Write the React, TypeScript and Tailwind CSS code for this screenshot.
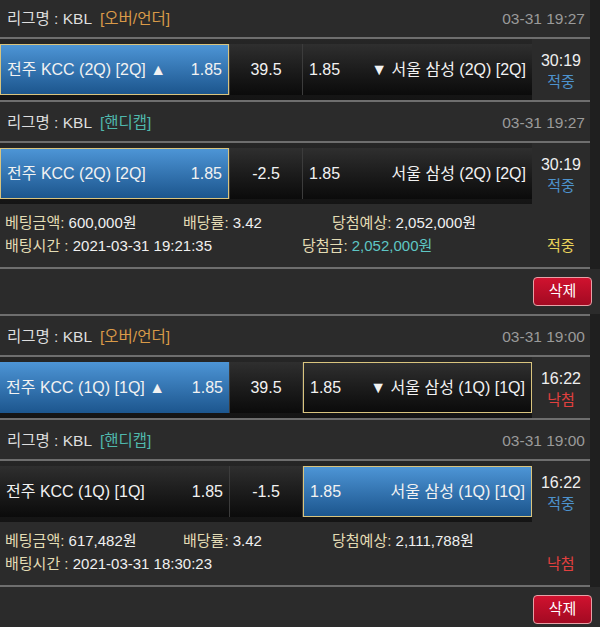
import React from 'react';

type Side = 'blue' | 'dark';

interface Bet {
  league: string;
  market: '[오버/언더]' | '[핸디캡]';
  date: string;
  home: string;
  away: string;
  homeOdds: string;
  awayOdds: string;
  line: string;
  homeSide: Side;
  awaySide: Side;
  pick: 'home' | 'away';
  time: string;
  result: '적중' | '낙첨';
}

interface Slip {
  bets: Bet[];
  amount: string;
  rate: string;
  expected: string;
  placedAt: string;
  won?: string;
  result: '적중' | '낙첨';
}

const font = { fontFamily: '"Liberation Sans", "Noto Sans CJK KR", sans-serif' };

const slips: Slip[] = [
  {
    amount: '600,000원',
    rate: '3.42',
    expected: '2,052,000원',
    placedAt: '2021-03-31 19:21:35',
    won: '2,052,000원',
    result: '적중',
    bets: [
      {
        league: 'KBL',
        market: '[오버/언더]',
        date: '03-31 19:27',
        home: '전주 KCC (2Q) [2Q] ▲',
        away: '▼ 서울 삼성 (2Q) [2Q]',
        homeOdds: '1.85',
        awayOdds: '1.85',
        line: '39.5',
        homeSide: 'blue',
        awaySide: 'dark',
        pick: 'home',
        time: '30:19',
        result: '적중',
      },
      {
        league: 'KBL',
        market: '[핸디캡]',
        date: '03-31 19:27',
        home: '전주 KCC (2Q) [2Q]',
        away: '서울 삼성 (2Q) [2Q]',
        homeOdds: '1.85',
        awayOdds: '1.85',
        line: '-2.5',
        homeSide: 'blue',
        awaySide: 'dark',
        pick: 'home',
        time: '30:19',
        result: '적중',
      },
    ],
  },
  {
    amount: '617,482원',
    rate: '3.42',
    expected: '2,111,788원',
    placedAt: '2021-03-31 18:30:23',
    result: '낙첨',
    bets: [
      {
        league: 'KBL',
        market: '[오버/언더]',
        date: '03-31 19:00',
        home: '전주 KCC (1Q) [1Q] ▲',
        away: '▼ 서울 삼성 (1Q) [1Q]',
        homeOdds: '1.85',
        awayOdds: '1.85',
        line: '39.5',
        homeSide: 'blue',
        awaySide: 'dark',
        pick: 'away',
        time: '16:22',
        result: '낙첨',
      },
      {
        league: 'KBL',
        market: '[핸디캡]',
        date: '03-31 19:00',
        home: '전주 KCC (1Q) [1Q]',
        away: '서울 삼성 (1Q) [1Q]',
        homeOdds: '1.85',
        awayOdds: '1.85',
        line: '-1.5',
        homeSide: 'dark',
        awaySide: 'blue',
        pick: 'away',
        time: '16:22',
        result: '적중',
      },
    ],
  },
];

function Line() {
  return <div className="h-[2px] w-[590px] bg-[#6e6e6e]" />;
}

function Cell({
  side,
  picked,
  children,
}: {
  side: Side;
  picked: boolean;
  children: React.ReactNode;
}) {
  const bg =
    side === 'blue'
      ? 'bg-linear-to-b from-[#4d95d6] to-[#1c568e]'
      : 'bg-linear-to-b from-[#2f2f2f] to-[#0b0b0b]';
  return (
    <div
      className={`w-[229px] h-[51px] flex items-center justify-between px-[6px] text-[16px] text-[#f2f2f2] ${bg} ${
        picked ? 'border border-[#d9c47e]' : ''
      }`}
    >
      {children}
    </div>
  );
}

function BetRow({ bet, first }: { bet: Bet; first: boolean }) {
  const marketColor =
    bet.market === '[오버/언더]' ? 'text-[#d99a48]' : 'text-[#4fb8ac]';
  return (
    <>
      {/* 리그 헤더 */}
      <div
        className={`w-[590px] flex items-center justify-between px-[7px] bg-[#2b2b2b] ${
          first ? 'h-[37px] pt-[1px]' : 'h-[39px] pt-[2px]'
        }`}
      >
        <p className="text-[15.5px] text-[#dedede]">
          리그명 : {bet.league}
          <span className={`ml-[8px] ${marketColor}`}>{bet.market}</span>
        </p>
        <p className="text-[15.5px] text-[#9a9a9a] -mr-[2px]">{bet.date}</p>
      </div>
      <Line />

      {/* 경기 */}
      <div className="w-[590px] h-[61px] flex items-center bg-linear-to-b from-[#262626] to-[#141414]">
        <Cell side={bet.homeSide} picked={bet.pick === 'home'}>
          <span>{bet.home}</span>
          <span>{bet.homeOdds}</span>
        </Cell>
        <div className="w-[74px] h-[51px] flex items-center justify-center text-[16px] text-[#f2f2f2] bg-linear-to-b from-[#2f2f2f] to-[#0b0b0b] border-x border-[#3c3c3c]">
          {bet.line}
        </div>
        <Cell side={bet.awaySide} picked={bet.pick === 'away'}>
          <span>{bet.awayOdds}</span>
          <span>{bet.away}</span>
        </Cell>
        <div className="flex-1 h-full flex flex-col items-center justify-center pt-[3px] bg-[#2b2b2b] leading-[21px]">
          <span className="text-[16px] text-[#efefef]">{bet.time}</span>
          <span
            className={`text-[15px] ${
              bet.result === '적중' ? 'text-[#4d92cd]' : 'text-[#e2403f]'
            }`}
          >
            {bet.result}
          </span>
        </div>
      </div>
    </>
  );
}

function SlipCard({ slip, first }: { slip: Slip; first: boolean }) {
  return (
    <div>
      {slip.bets.map((bet, i) => (
        <React.Fragment key={i}>
          {i > 0 && <Line />}
          <BetRow bet={bet} first={first && i === 0} />
        </React.Fragment>
      ))}

      {/* 배팅 정보 */}
      <div className="w-[590px] h-[63px] pt-[7px] pl-[5px] bg-[#2b2b2b] text-[15px] leading-[23px] text-[#f0f0f0]">
        <div className="flex">
          <div className="w-[178px] shrink-0">
            <span className="text-[#e3dcb4]">베팅금액:</span> {slip.amount}
          </div>
          <div className="w-[149px] shrink-0">
            <span className="text-[#e3dcb4]">배당률:</span> {slip.rate}
          </div>
          <div>
            <span className="text-[#e3dcb4]">당첨예상:</span> {slip.expected}
          </div>
        </div>
        <div className="flex">
          <div className="w-[297px] shrink-0">
            <span className="text-[#e3dcb4]">배팅시간 :</span> {slip.placedAt}
          </div>
          <div className="w-[245px] shrink-0">
            {slip.won && (
              <>
                <span className="text-[#e3dcb4]">당첨금:</span>{' '}
                <span className="text-[#5ec6c4]">{slip.won}</span>
              </>
            )}
          </div>
          <div
            className={
              slip.result === '적중' ? 'text-[#e9d35a]' : 'text-[#e2403f]'
            }
          >
            {slip.result}
          </div>
        </div>
      </div>
      <Line />

      {/* 삭제 */}
      <div className="w-[600px] h-[45px] flex items-center justify-end pr-[8px] bg-[#2b2b2b]">
        <button className="w-[59px] h-[29px] rounded-[4px] border border-[#e6a0a6] bg-linear-to-b from-[#d0122f] to-[#a30a22] text-[15px] text-white">
          삭제
        </button>
      </div>
      <Line />
    </div>
  );
}

export default function App() {
  return (
    <div className="w-[600px] h-[627px] overflow-hidden bg-[#1f1f1f]" style={font}>
      {slips.map((slip, i) => (
        <SlipCard key={i} slip={slip} first={i === 0} />
      ))}
    </div>
  );
}
